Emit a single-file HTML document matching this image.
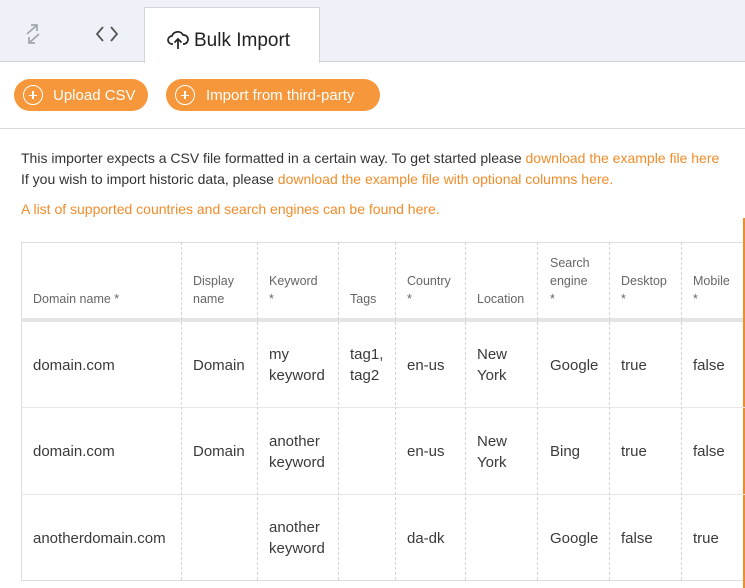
<!DOCTYPE html><html><head><style>
body{margin:0;width:745px;height:588px;overflow:hidden;background:#fff;font-family:"Liberation Sans",sans-serif;position:relative;color:#333}
.a{position:absolute;white-space:nowrap}
.t{font-size:15px;color:#3a3a3a;line-height:21px}
.h{font-size:12.5px;color:#666;line-height:18px}
.v{position:absolute;top:242px;height:338px;border-left:1px dashed #d4d4d4;width:0}
.r{position:absolute;left:21px;width:724px;height:0;border-top:1px solid #e6e6e6}
.btn{position:absolute;top:79px;height:32px;border-radius:16px;background:#f5973a;color:#fff;font-size:15px;line-height:33px}
.pl{position:absolute;left:9px;top:6px;width:20px;height:20px;border:1.5px solid #fff;border-radius:50%;box-sizing:border-box}
.pl:before{content:"";position:absolute;left:4.5px;top:8.5px;width:8px;height:1.5px;background:#fff}
.pl:after{content:"";position:absolute;left:8px;top:5px;width:1.5px;height:8px;background:#fff}
.o{color:#f08c2a}
</style></head><body>
<div class="a" style="left:0;top:0;width:745px;height:61px;background:#eef1f7;border-bottom:1px solid #cfd4de"></div>
<div class="a" style="left:144px;top:7px;width:174px;height:55px;background:#fff;border:1px solid #cfd4de;border-bottom:none"></div>
<svg class="a" style="left:22px;top:22px" width="22" height="24" viewBox="0 0 22 24" fill="none" stroke="#a3a8b0" stroke-width="1.8"><path d="M5 12 L15 3 M9 3 H15 V9"/><path d="M17 12 L7 21 M7 15 V21 H13"/></svg>
<svg class="a" style="left:95px;top:25px" width="24" height="18" viewBox="0 0 24 18" fill="none" stroke="#555" stroke-width="1.8"><path d="M8 2 L2 9 L8 16 M16 2 L22 9 L16 16"/></svg>
<svg class="a" style="left:167px;top:30px" width="22" height="20" viewBox="0 0 22 20" fill="none" stroke="#222" stroke-width="1.7"><path d="M6 14 H5 A4 4 0 0 1 5 6 A6 6 0 0 1 16 5 A4.5 4.5 0 0 1 17 14 H16"/><path d="M11 19 V9 M7.5 12.5 L11 9 L14.5 12.5"/></svg>
<div class="a" style="left:194px;top:30px;font-size:19px;color:#222">Bulk Import</div>
<div class="btn" style="left:14px;width:134px"><span class="pl"></span><span style="position:absolute;left:39px">Upload CSV</span></div>
<div class="btn" style="left:166px;width:214px"><span class="pl"></span><span style="position:absolute;left:40px">Import from third-party</span></div>
<div class="a" style="left:0;top:128px;width:745px;border-top:1px solid #d8d8d8"></div>
<div class="a" style="left:21px;top:150px;font-size:14px;color:#333">This importer expects a CSV file formatted in a certain way. To get started please <span class="o">download the example file here</span></div>
<div class="a" style="left:21px;top:171px;font-size:14px;color:#333">If you wish to import historic data, please <span class="o">download the example file with optional columns here.</span></div>
<div class="a o" style="left:21px;top:201px;font-size:14px">A list of supported countries and search engines can be found here.</div>
<div class="a" style="left:21px;top:242px;width:730px;height:337px;border:1px solid #ddd;border-right:none"></div>
<div class="a" style="left:743px;top:218px;width:2px;height:370px;background:#f08c2a"></div>
<div class="a" style="left:21px;top:318px;width:722px;height:4px;background:#e4e4e4"></div>
<div class="r" style="top:407px"></div><div class="r" style="top:494px"></div>
<div class="v" style="left:181px"></div><div class="v" style="left:257px"></div><div class="v" style="left:338px"></div><div class="v" style="left:395px"></div><div class="v" style="left:465px"></div><div class="v" style="left:537px"></div><div class="v" style="left:609px"></div><div class="v" style="left:681px"></div>
<div class="a h" style="left:33px;top:290px">Domain name *</div>
<div class="a h" style="left:193px;top:272px">Display<br>name</div>
<div class="a h" style="left:269px;top:272px">Keyword<br>*</div>
<div class="a h" style="left:350px;top:290px">Tags</div>
<div class="a h" style="left:407px;top:272px">Country<br>*</div>
<div class="a h" style="left:477px;top:290px">Location</div>
<div class="a h" style="left:550px;top:254px">Search<br>engine<br>*</div>
<div class="a h" style="left:621px;top:272px">Desktop<br>*</div>
<div class="a h" style="left:693px;top:272px">Mobile<br>*</div>

<div class="a t" style="left:33px;top:355px">domain.com</div>
<div class="a t" style="left:193px;top:355px">Domain</div>
<div class="a t" style="left:269px;top:344px">my<br>keyword</div>
<div class="a t" style="left:350px;top:344px">tag1,<br>tag2</div>
<div class="a t" style="left:407px;top:355px">en-us</div>
<div class="a t" style="left:477px;top:344px">New<br>York</div>
<div class="a t" style="left:550px;top:355px">Google</div>
<div class="a t" style="left:621px;top:355px">true</div>
<div class="a t" style="left:693px;top:355px">false</div>

<div class="a t" style="left:33px;top:441px">domain.com</div>
<div class="a t" style="left:193px;top:441px">Domain</div>
<div class="a t" style="left:269px;top:431px">another<br>keyword</div>
<div class="a t" style="left:407px;top:441px">en-us</div>
<div class="a t" style="left:477px;top:431px">New<br>York</div>
<div class="a t" style="left:550px;top:441px">Bing</div>
<div class="a t" style="left:621px;top:441px">true</div>
<div class="a t" style="left:693px;top:441px">false</div>

<div class="a t" style="left:33px;top:528px">anotherdomain.com</div>
<div class="a t" style="left:269px;top:517px">another<br>keyword</div>
<div class="a t" style="left:407px;top:528px">da-dk</div>
<div class="a t" style="left:550px;top:528px">Google</div>
<div class="a t" style="left:621px;top:528px">false</div>
<div class="a t" style="left:693px;top:528px">true</div>
</body></html>
